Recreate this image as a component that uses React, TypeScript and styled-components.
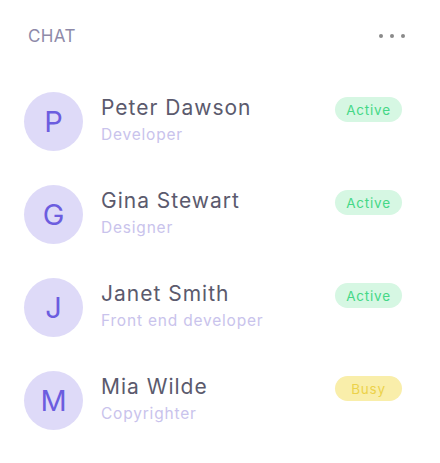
import React from 'react';
import styled, { createGlobalStyle } from 'styled-components';

const GlobalStyle = createGlobalStyle`
  body {
    margin: 0;
    background: #ffffff;
    font-family: Inter, 'Noto Sans', sans-serif;
  }
`;

const Card = styled.section`
  width: 440px;
  height: 463px;
  box-sizing: border-box;
  padding: 24px 34px 0 24px;
  background: #ffffff;
`;

const Header = styled.div`
  display: flex;
  justify-content: space-between;
  align-items: center;
  height: 24px;
  padding-left: 4px;
`;

const Title = styled.h2`
  margin: 0;
  color: #8e8aa9;
  font-size: 17px;
  font-weight: 400;
  letter-spacing: 0.4px;
`;

const Dots = styled.div`
  display: flex;
  gap: 7px;
  padding-right: 1px;
`;

const Dot = styled.span`
  width: 4px;
  height: 4px;
  border-radius: 50%;
  background: #8a8a8a;
`;

const List = styled.ul`
  list-style: none;
  margin: 44px 0 0;
  padding: 0;
  display: flex;
  flex-direction: column;
  gap: 34px;
`;

const Row = styled.li`
  display: grid;
  grid-template-columns: 59px 1fr auto;
  column-gap: 18px;
  align-items: start;
  padding-right: 4px;
`;

const Avatar = styled.div`
  width: 59px;
  height: 59px;
  border-radius: 50%;
  background: #dedaf8;
  color: #6c5ddf;
  display: flex;
  align-items: center;
  justify-content: center;
  font-size: 29px;
  font-weight: 400;
`;

const Info = styled.div`
  display: flex;
  flex-direction: column;
  padding-top: 3px;
`;

const Name = styled.span`
  color: #5b5a6d;
  font-size: 21px;
  line-height: 26px;
  letter-spacing: 1px;
`;

const Role = styled.span`
  margin-top: 4px;
  color: #c9c3ec;
  font-size: 15.5px;
  line-height: 20px;
  letter-spacing: 0.8px;
`;

const Badge = styled.span<{ $busy?: boolean }>`
  margin-top: 5px;
  width: 67px;
  height: 25px;
  border-radius: 13px;
  display: flex;
  align-items: center;
  justify-content: center;
  font-size: 13.5px;
  letter-spacing: 0.8px;
  background: ${(p) => (p.$busy ? '#f9eeaa' : '#d6f7e3')};
  color: ${(p) => (p.$busy ? '#ecd24a' : '#45d786')};
`;

const people = [
  { name: 'Peter Dawson', role: 'Developer', status: 'Active' },
  { name: 'Gina Stewart', role: 'Designer', status: 'Active' },
  { name: 'Janet Smith', role: 'Front end developer', status: 'Active' },
  { name: 'Mia Wilde', role: 'Copyrighter', status: 'Busy' },
];

export default function App() {
  return (
    <>
      <GlobalStyle />
      <Card>
        <Header>
          <Title>CHAT</Title>
          <Dots>
            <Dot />
            <Dot />
            <Dot />
          </Dots>
        </Header>
        <List>
          {people.map((p) => (
            <Row key={p.name}>
              <Avatar>{p.name[0]}</Avatar>
              <Info>
                <Name>{p.name}</Name>
                <Role>{p.role}</Role>
              </Info>
              <Badge $busy={p.status === 'Busy'}>{p.status}</Badge>
            </Row>
          ))}
        </List>
      </Card>
    </>
  );
}
